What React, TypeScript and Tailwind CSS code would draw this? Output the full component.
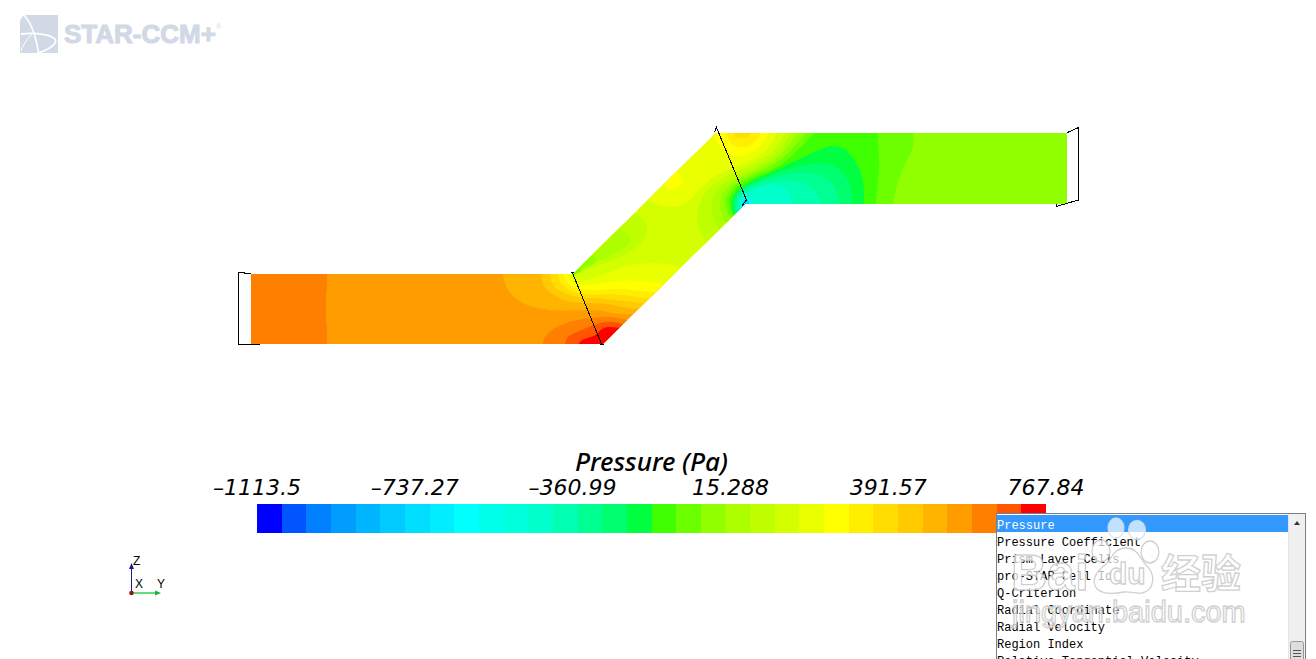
import React from "react";

type Point = [number, number];

const SCALE = [
  "#0000ff", "#0055ff", "#0080ff", "#009dff", "#00b5ff", "#00caff", "#00ddff", "#00eeff",
  "#00ffff", "#00ffea", "#00ffdb", "#00ffca", "#00ffb0", "#00ff93", "#00ff70", "#00ff40",
  "#40ff00", "#6cff00", "#90ff00", "#adff00", "#c0ff00", "#d4ff00", "#eaff00", "#ffff00",
  "#ffee00", "#ffdd00", "#ffca00", "#ffb500", "#ff9d00", "#ff8000", "#ff5500", "#ff0000",
];

const TICKS = ["–1113.5", "–737.27", "–360.99", "15.288", "391.57", "767.84"];

const FIELDS = [
  "Pressure",
  "Pressure Coefficient",
  "Prism Layer Cells",
  "pro-STAR Cell Id",
  "Q-Criterion",
  "Radial Coordinate",
  "Radial Velocity",
  "Region Index",
  "Relative Tangential Velocity",
];

// Smooth open curve through the given points (Catmull-Rom as cubic Beziers).
function curve(pts: Point[]): string {
  let d = `M${pts[0][0]} ${pts[0][1]}`;
  for (let i = 0; i < pts.length - 1; i++) {
    const a = pts[i - 1] ?? pts[i];
    const b = pts[i];
    const c = pts[i + 1];
    const e = pts[i + 2] ?? c;
    d += `C${b[0] + (c[0] - a[0]) / 6} ${b[1] + (c[1] - a[1]) / 6} ${c[0] - (e[0] - b[0]) / 6} ${c[1] - (e[1] - b[1]) / 6} ${c[0]} ${c[1]}`;
  }
  return d;
}

// Iso-lines leaving the inlet duct, each region extends up and to the right.
const INLET: [number, Point[]][] = [
  [27, [[67, 130], [85, 180], [130, 220], [210, 240], [290, 241], [350, 240], [400, 250], [460, 254]]],
  [26, [[183, 130], [190, 165], [215, 190], [260, 212], [310, 218], [380, 222], [430, 232], [486, 238]]],
  [25, [[210, 130], [220, 165], [250, 187], [300, 202], [370, 206], [440, 214], [505, 222]]],
  [24, [[232, 130], [245, 162], [280, 186], [330, 194], [400, 192], [470, 200], [522, 205]]],
  [23, [[248, 130], [262, 158], [290, 175], [340, 181], [420, 177], [490, 184], [536, 189]]],
  [22, [[262, 130], [275, 154], [300, 164], [350, 163], [420, 152], [500, 154], [556, 166]]],
  [21, [[275, 130], [290, 147], [320, 150], [380, 130], [440, 109], [500, 100], [560, 102], [610, 116]]],
];

const HOT: [number, Point[]][] = [
  [29, [[188, 345], [195, 322], [220, 297], [260, 278], [330, 265], [400, 262], [460, 276]]],
  [30, [[254, 345], [265, 320], [310, 298], [360, 279], [400, 276], [450, 288]]],
  [31, [[296, 345], [305, 331], [345, 316], [365, 298], [388, 291], [440, 296]]],
];

// Iso-lines wrapping the inner corner of the outlet bend.
const BEND: [number, Point[]][] = [
  [20, [[260, 35], [210, 100], [120, 150], [60, 180], [18, 215], [-6, 270], [-6, 320], [15, 360]]],
  [19, [[278, 35], [220, 108], [130, 160], [75, 190], [42, 225], [35, 270], [55, 330]]],
  [18, [[298, 35], [230, 114], [135, 167], [90, 195], [64, 228], [62, 268], [78, 310]]],
  [17, [[322, 35], [240, 121], [140, 173], [100, 200], [77, 235], [80, 270], [95, 295]]],
  [16, [[347, 35], [250, 129], [145, 180], [108, 205], [88, 235], [90, 265], [105, 285]]],
];

const COLD: [number, Point[]][] = [
  [15, [[100, 290], [95, 245], [110, 215], [150, 187], [250, 140], [370, 85], [405, 79], [440, 92], [475, 140], [490, 190], [492, 256]]],
  [14, [[106, 285], [102, 240], [120, 212], [170, 182], [280, 143], [370, 131], [420, 150], [448, 190], [457, 256]]],
  [13, [[110, 280], [107, 237], [130, 211], [180, 186], [270, 162], [350, 163], [400, 195], [418, 256]]],
  [12, [[114, 275], [114, 236], [140, 211], [220, 186], [290, 184], [340, 208], [364, 256]]],
  [11, [[120, 270], [120, 236], [150, 212], [210, 192], [258, 208], [282, 256]]],
  [9, [[124, 262], [122, 244], [136, 230], [152, 240], [158, 256]]],
  [5, [[128, 258], [130, 244], [138, 237], [146, 246], [148, 256]]],
];

const CREST: [number, Point[]][] = [
  [23, [[40, 35], [58, 78], [98, 108], [150, 98], [188, 70], [208, 35]]],
  [24, [[78, 35], [92, 68], [128, 82], [165, 66], [186, 35]]],
  [25, [[94, 35], [108, 50], [128, 53], [145, 49], [157, 35]]],
];

function PressureField() {
  return (
    <svg viewBox="0 110 1316 250" className="block h-auto w-full" role="img" aria-label="Pressure contours in the duct">
      <clipPath id="duct">
        <path d="M251 274H573L716 133H1067V204H745L603 344H251Z" />
      </clipPath>
      <g clipPath="url(#duct)">
        <path d="M240 260H1080V350H240Z" fill={SCALE[28]} />
        <path d="M240 260H327V290L326 294V322L327 326V350H240Z" fill={SCALE[29]} />
        <g transform="translate(480 230) scale(.33333)">
          {INLET.map(([level, pts]) => (
            <path key={level} d={`${curve(pts)}H2400V-500H${pts[0][0]}Z`} fill={SCALE[level]} />
          ))}
          {HOT.map(([level, pts]) => (
            <path key={level} d={`${curve(pts)}V345Z`} fill={SCALE[level]} />
          ))}
        </g>
        <g transform="translate(560 110) scale(.33333)">
          <path d={`${curve([[36, 496], [110, 467], [200, 432], [250, 390], [260, 350], [247, 325], [220, 308]])}L30 480Z`} fill={SCALE[20]} />
          <path d={`${curve([[38, 497], [110, 457], [170, 428], [205, 402], [211, 383], [195, 366], [172, 356]])}L30 480Z`} fill={SCALE[19]} />
          <path d={`${curve([[40, 496], [66, 476], [92, 465], [107, 452], [104, 440], [92, 438]])}L30 480Z`} fill={SCALE[18]} />
          <path d="M38 494L48 482L68 480L56 488Z" fill={SCALE[17]} />
        </g>
        <g transform="translate(700 120) scale(.33333)">
          <path d={`${curve([[235, 35], [190, 98], [115, 137], [55, 162], [10, 196], [-22, 232], [-48, 252], [-80, 261], [-118, 256], [-165, 236]])}V-100H235Z`} fill={SCALE[22]} />
          <path d={`${curve([[-108, 180], [-102, 200], [-84, 209], [-62, 202], [-52, 182], [-60, 162], [-80, 150]])}Z`} fill={SCALE[23]} />
          {BEND.map(([level, pts]) => (
            <path key={level} d={`${curve(pts)}V600H2400V-100H${pts[0][0]}Z`} fill={SCALE[level]} />
          ))}
          {COLD.map(([level, pts]) => (
            <path key={level} d={`${curve(pts)}V300H90Z`} fill={SCALE[level]} />
          ))}
          {CREST.map(([level, pts]) => (
            <path key={level} d={`${curve(pts)}Z`} fill={SCALE[level]} />
          ))}
          <path d={`${curve([[533, 35], [537, 120], [534, 190], [526, 256]])}H2400V35Z`} fill={SCALE[17]} />
          <path d={`${curve([[642, 35], [637, 85], [605, 155], [588, 205], [579, 256]])}H2400V35Z`} fill={SCALE[18]} />
        </g>
      </g>
      <g fill="none" stroke="#000" strokeWidth="1" shapeRendering="crispEdges">
        <path d="M251 273.500H244V272.500H238.500V344.500H260" />
        <path d="M571 272.500H574M572.500 273L601.500 344M600 344.500H604" />
        <path d="M714.500 132L716.500 127.500L746.500 200L742 206" />
        <path d="M1067.500 132.500L1078.500 127.500V200L1056 206.500V204" />
      </g>
    </svg>
  );
}

function Brand() {
  return (
    <header className="flex h-[110px] items-start gap-1.5 pl-5 pt-[15px] text-[#d1d8e6]">
      <svg viewBox="0 0 38 38" className="h-[38px] w-[38px]" aria-hidden="true">
        <path d="M5 0H38V38H0V6Q2 1 5 0Z" fill="currentColor" />
        <g fill="none" stroke="#fff">
          <path d="M4 0C12 9 16 21 18.500 38" strokeWidth="1.600" />
          <path d="M1 19C16 17 33 20 35.500 25C36.500 30 28 35 18 38" strokeWidth="1.800" />
          <path d="M12 19C7 24 3 30 1 36" strokeWidth="1" />
        </g>
      </svg>
      <h1 className="flex items-start font-['Liberation_Sans',sans-serif] text-[26px] font-bold leading-[38px] [-webkit-text-stroke:1px_#d1d8e6]">
        STAR-CCM+
        <span className="text-[7px] font-normal leading-6 [-webkit-text-stroke:0px]">®</span>
      </h1>
    </header>
  );
}

function Legend() {
  return (
    <section aria-label="Pressure scale" className="ml-[257px] mr-[270px] mt-[88px]">
      <h2 className="text-center font-['Noto_Sans',sans-serif] text-[26px] font-medium italic leading-[26px]">Pressure (Pa)</h2>
      <div className="mb-1 mt-0.5 flex justify-between font-['DejaVu_Sans',sans-serif] text-[22px] italic leading-6">
        {TICKS.map((t) => (
          <span key={t} className="flex w-0 justify-center whitespace-nowrap">{t}</span>
        ))}
      </div>
      <div className="flex h-[29px]">
        {SCALE.map((c) => (
          <div key={c} className="flex-1" style={{ backgroundColor: c }} />
        ))}
      </div>
    </section>
  );
}

function AxisTriad() {
  return (
    <svg width="60" height="55" viewBox="120 550 60 55" className="ml-[120px] mt-[17px] block" role="img" aria-label="Axes">
      <path d="M131.500 593V567" stroke="#1c1c8c" />
      <path d="M131.500 563L134 569H129Z" fill="#1c1c8c" />
      <path d="M131 593H156" stroke="#2fd04f" strokeWidth="1.500" />
      <path d="M155 590.500L161 593L155 595.500Z" fill="#1fae3c" />
      <circle cx="131.500" cy="593" r="2.300" fill="#951414" />
      <g className="font-['Liberation_Sans',sans-serif] text-[12px]" fill="#000">
        <text x="133" y="565">Z</text>
        <text x="135" y="588">X</text>
        <text x="157" y="588">Y</text>
      </g>
    </svg>
  );
}

function Watermark() {
  return (
    <svg
      width="250" height="125" viewBox="1005 510 250 125"
      className="pointer-events-none absolute left-[8px] top-[-4px]"
      fill="#fff" fillOpacity=".7" stroke="#c4c4c4" strokeOpacity=".8" strokeWidth="1.300"
    >
      <g stroke="#d5dde6">
        <ellipse cx="1116" cy="528" rx="8" ry="10" />
        <ellipse cx="1137" cy="530" rx="8.500" ry="9.500" />
      </g>
      <ellipse cx="1101" cy="551" rx="9" ry="11" />
      <ellipse cx="1150" cy="552" rx="9" ry="11" />
      <path d="M1126 548C1137 548 1139 557 1146 565C1156 574 1155 590 1142 593C1134 594 1130 591 1124 592C1114 594 1104 595 1097 589C1090 580 1097 571 1106 564C1113 557 1114 548 1126 548Z" />
      <g className="font-['Liberation_Sans','Noto_Sans_CJK_SC',sans-serif]">
        <text x="1011" y="590" className="text-[50px] font-bold">Bai</text>
        <text x="1109" y="584" className="text-[30px] font-bold">du</text>
        <text x="1161" y="588" className="text-[40px] font-bold">经验</text>
        <text x="1012" y="622" className="text-[29px]">jingyan.baidu.com</text>
      </g>
    </svg>
  );
}

function FieldMenu() {
  return (
    <div className="absolute bottom-0 right-[10px] top-[513px] w-[310px] border-x border-t border-[#7a7f88] bg-white">
      <div className="flex h-full overflow-hidden">
        <select
          aria-label="Field function"
          size={9}
          defaultValue="Pressure"
          className="h-[156px] min-w-0 flex-1 appearance-none overflow-hidden rounded-none border-0 bg-white p-0 pt-px font-['Liberation_Mono',monospace] text-[12px] outline-none [scrollbar-width:none]"
        >
          {FIELDS.map((f) => (
            <option
              key={f}
              value={f}
              className="h-[17px] min-h-0 p-0 pt-1 leading-[13px] text-black checked:bg-[linear-gradient(#3399ff,#3399ff)] checked:[-webkit-text-fill-color:#fff]"
            >
              {f}
            </option>
          ))}
        </select>
        <div className="flex w-[17px] flex-col items-center justify-between border-l border-[#e4e4e4] bg-[#f0f0f0]" aria-hidden="true">
          <svg width="16" height="17" viewBox="0 0 16 17">
            <path d="M5 11L8 7L11 11Z" fill="#333" />
          </svg>
          <svg width="16" height="18" viewBox="0 0 16 18">
            <path d="M1.500 19V2.500Q1.500 .5 3.500 .5H12.500Q14.500 .5 14.500 2.500V19" fill="#dedede" stroke="#969696" />
            <path d="M4 9.500H12M4 12.500H12M4 15.500H12" stroke="#555" />
          </svg>
        </div>
      </div>
      <Watermark />
    </div>
  );
}

export default function App() {
  return (
    <main className="relative min-h-screen overflow-hidden bg-white text-black">
      <Brand />
      <PressureField />
      <Legend />
      <AxisTriad />
      <FieldMenu />
    </main>
  );
}
